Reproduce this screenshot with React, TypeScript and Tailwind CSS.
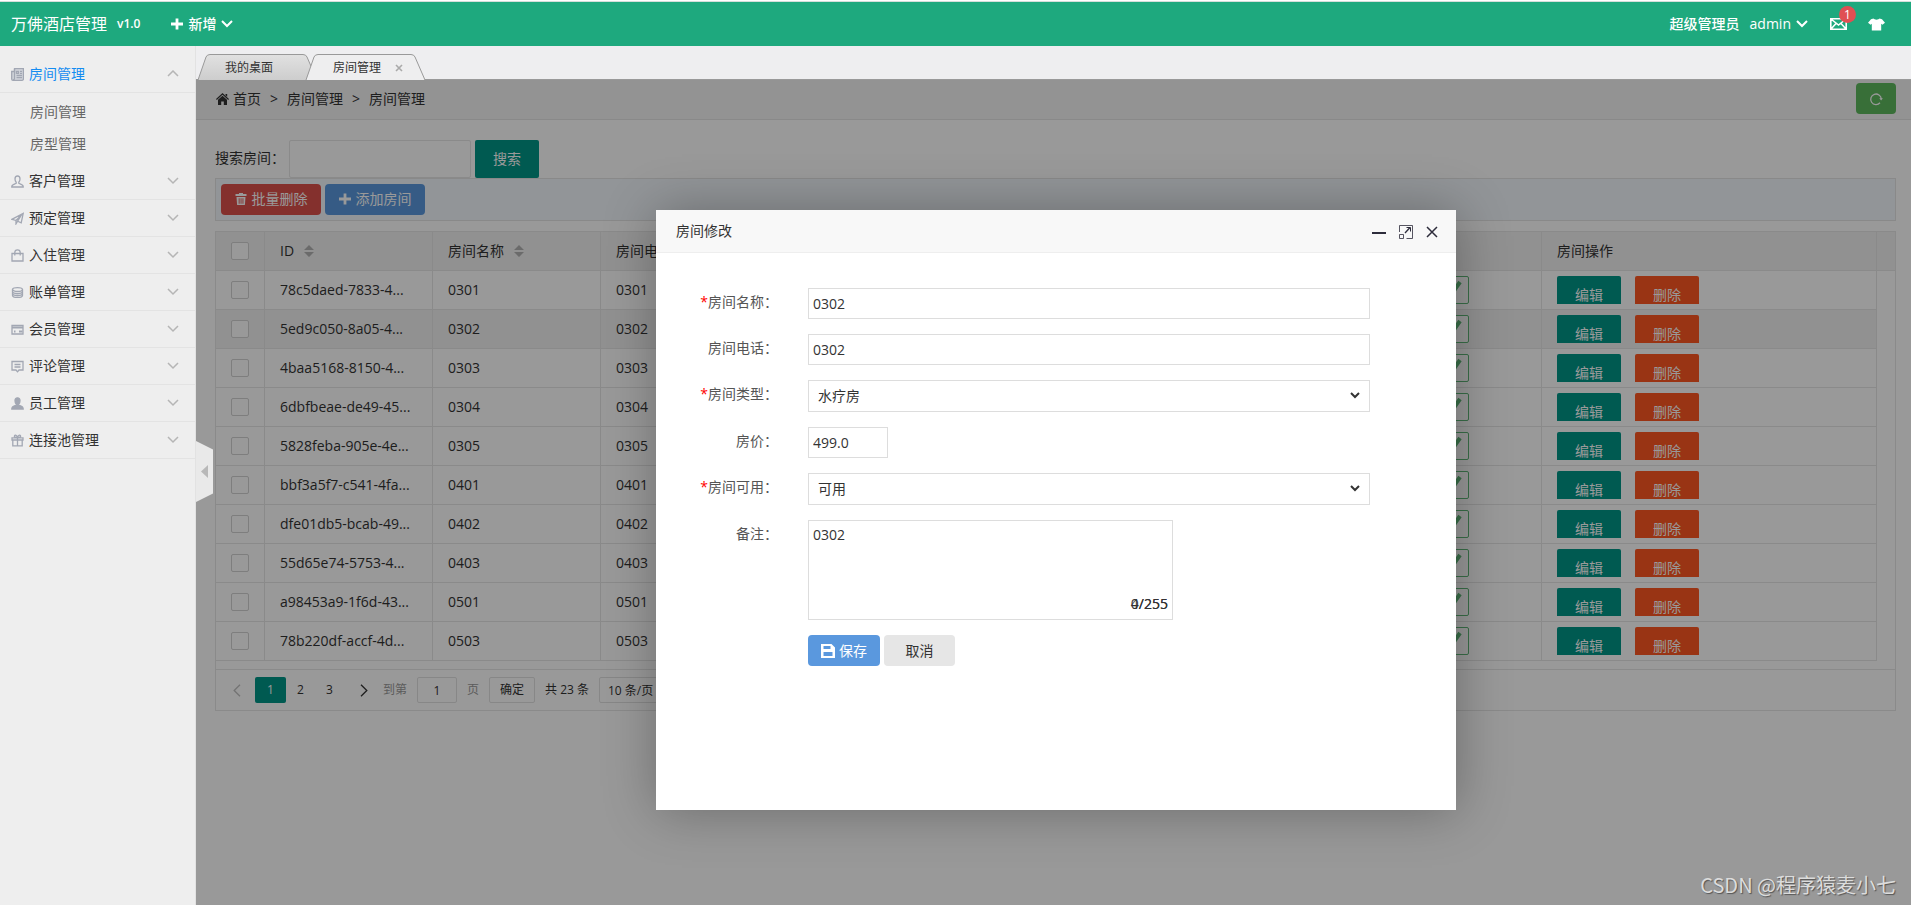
import { useState, type ReactNode } from 'react'

const rooms = [
  { id: '78c5daed-7833-4...', name: '0301' },
  { id: '5ed9c050-8a05-4...', name: '0302' },
  { id: '4baa5168-8150-4...', name: '0303' },
  { id: '6dbfbeae-de49-45...', name: '0304' },
  { id: '5828feba-905e-4e...', name: '0305' },
  { id: 'bbf3a5f7-c541-4fa...', name: '0401' },
  { id: 'dfe01db5-bcab-49...', name: '0402' },
  { id: '55d65e74-5753-4...', name: '0403' },
  { id: 'a98453a9-1f6d-43...', name: '0501' },
  { id: '78b220df-accf-4d...', name: '0503' },
]

const menuIcons: Record<string, ReactNode> = {
  room: (
    <>
      <path d="M3.5.7h8.900v10.300a1.300 1.300 0 0 1-1.300 1.300H2A1.300 1.300 0 0 1 .7 11V3.500h2.800z" fill="#d3d6dc" />
      <path d="M3.500 1v9.500A1.500 1.500 0 0 1 2 12" />
      <path d="M5.500 3.300h2v2h-2zM9 3.300h2M9 5.300h2M5.500 7.500H11M5.500 9.700H11" />
    </>
  ),
  customer: <path d="M6.500 1C4.800 1 4 2.300 4 4c0 1.600.5 2.600 1.200 3.300v1C4 9 .8 9.500.8 11.500V12h11.400v-.5c0-2-3.200-2.500-4.400-3.200v-1C8.500 6.600 9 5.600 9 4c0-1.700-.8-3-2.500-3z" />,
  booking: <path d="M.8 7.300 12.200 1.300 10.200 10.800 6.600 9.200 5 11.800V8.500L.8 7.300zM5 8.500l5.500-5.500M6.600 9.200l4-6.500" />,
  checkin: <path d="M1 4.500h11V12H1zM3.800 6.500v-3C3.800 2 5 .8 6.500.8S9.200 2 9.200 3.500v3" />,
  bill: (
    <>
      <ellipse cx="6.500" cy="3.500" rx="5" ry="1.900" />
      <path d="M1.500 3.500v6c0 1 2.200 1.900 5 1.900s5-.9 5-1.900v-6M1.500 5.600c0 1 2.200 1.900 5 1.900s5-.9 5-1.900M1.500 7.600c0 1 2.200 1.900 5 1.900s5-.9 5-1.900" />
    </>
  ),
  member: (
    <>
      <path d="M1 2.500h11v8.500H1z" />
      <path d="M1 4.500h11M8 8.500h3.500M3 8.500h1.500" strokeWidth="2" />
    </>
  ),
  comment: <path d="M1 1.500h11v8.500H8L6.500 11.800 5 10H1zM3.500 4.500h6M3.500 7h6" />,
  staff: <path d="M6.500.8C4.800.8 4 2.100 4 3.800c0 1.700.6 2.700 1.300 3.400v1C4 9 .8 9 .8 12h11.400c0-3-3.200-3-4.500-3.800v-1C8.400 6.500 9 5.500 9 3.800 9 2.100 8.200.8 6.500.8z" fill="currentColor" />,
  pool: <path d="M1 3.800h11V6H1zM1.800 6v5.800h9.400V6M6.500 3.800v8M6.500 3.500C4 3.500 3 2.800 3.500 1.800S6 1 6.500 3.500C7 1 9 .8 9.500 1.800S9 3.500 6.500 3.500z" />,
}

const menus = [
  { icon: 'customer', text: '客户管理' },
  { icon: 'booking', text: '预定管理' },
  { icon: 'checkin', text: '入住管理' },
  { icon: 'bill', text: '账单管理' },
  { icon: 'member', text: '会员管理' },
  { icon: 'comment', text: '评论管理' },
  { icon: 'staff', text: '员工管理' },
  { icon: 'pool', text: '连接池管理' },
]

function MenuIcon({ name }: { name: string }) {
  return (
    <svg width="13" height="13" viewBox="0 0 13 13" fill="none" stroke="currentColor" strokeWidth="1.3" className="shrink-0 text-[#a2a7b3]">
      {menuIcons[name]}
    </svg>
  )
}

function Chevron({ up = false, className = '' }: { up?: boolean; className?: string }) {
  return (
    <svg width="12" height="8" viewBox="0 0 12 8" fill="none" stroke="currentColor" className={className}>
      <path d={up ? 'M1 6l5-5 5 5' : 'M1 1l5 5 5-5'} />
    </svg>
  )
}

function PlusIcon() {
  return (
    <svg width="12" height="12" viewBox="0 0 12 12" fill="currentColor">
      <path d="M4.600.5h2.800v4.100H12v2.800H7.400v4.100H4.600V7.400H0V4.600h4.600z" />
    </svg>
  )
}

function TopBar() {
  return (
    <>
      <div className="h-[2px] shrink-0 border-b border-[#d5dedb] bg-white" />
      <header className="flex h-11 shrink-0 items-center bg-[#1ea97e] pr-[26px] pl-[11px] text-white">
        <a href="#" className="text-base leading-6">万佛酒店管理</a>
        <span className="ml-[10px] text-xs font-semibold">v1.0</span>
        <button type="button" className="ml-[31px] flex items-center gap-[5px] font-medium">
          <PlusIcon />
          新增
          <Chevron className="stroke-2" />
        </button>
        <div className="ml-auto flex items-center">
          <span className="font-medium">超级管理员</span>
          <button type="button" className="ml-[10px] flex items-center gap-[5px] font-medium">
            admin
            <Chevron className="stroke-2" />
          </button>
          <a href="#" aria-label="消息" className="relative ml-[22px]">
            <svg width="17" height="12" viewBox="0 0 17 12" fill="none" stroke="currentColor" strokeWidth="1.600">
              <path d="M.8.8h15.400v10.400H.8zM1 1l7.500 6L16 1M1 11l5-5.500M16 11l-5-5.500" />
            </svg>
            <span className="absolute -top-3 left-[9px] flex size-[17px] items-center justify-center rounded-full bg-[#e04f53] text-xs">1</span>
          </a>
          <a href="#" aria-label="换肤" className="ml-[21px]">
            <svg width="17" height="13" viewBox="0 0 17 13" fill="currentColor">
              <path d="M5.500.5C6.500 2 10.500 2 11.500.5L14 1.200l3 3.600-2.600 2-1.200-1V12.500H3.800V5.800l-1.200 1L0 4.800l3-3.600z" />
            </svg>
          </a>
        </div>
      </header>
    </>
  )
}

function Sidebar() {
  return (
    <aside className="w-49 shrink-0 border-r border-[#e2e2e2] bg-[#eee] pt-[10px]">
      <button type="button" className="flex h-[37px] w-full items-center border-b border-[#e3e3e3] pr-4 pl-[11px] text-[#148cf1]">
        <MenuIcon name="room" />
        <span className="ml-[5px]">房间管理</span>
        <Chevron up className="ml-auto stroke-[1.5] text-[#b5b5b5]" />
      </button>
      <ul className="py-[3px] pl-[30px] leading-8 text-[#666]">
        <li><a href="#">房间管理</a></li>
        <li><a href="#">房型管理</a></li>
      </ul>
      {menus.map((item) => (
        <button key={item.text} type="button" className="flex h-[37px] w-full items-center border-b border-[#e3e3e3] pr-4 pl-[11px]">
          <MenuIcon name={item.icon} />
          <span className="ml-[5px]">{item.text}</span>
          <Chevron className="ml-auto stroke-[1.5] text-[#b5b5b5]" />
        </button>
      ))}
    </aside>
  )
}

function Tab({ text, active = false }: { text: string; active?: boolean }) {
  return (
    <li className={`relative -mb-px flex h-[26px] w-[120px] items-center pt-[2px] pl-7 text-xs ${active ? '-ml-3' : ''}`}>
      <svg width="121" height="26" viewBox="0 0 121 26" className="absolute inset-0" fill={active ? '#eeeeef' : 'url(#tabFill)'}>
        <defs>
          <linearGradient id="tabFill" x1="0" y1="0" x2="0" y2="1">
            <stop offset="0" stopColor="#e1e1e1" />
            <stop offset="1" stopColor="#cdcdcd" />
          </linearGradient>
        </defs>
        <path d="M1 26 9 3Q10 .5 13 .5H106Q109 .5 110 3L120 26" stroke="#999" />
      </svg>
      <a href="#" className="relative">{text}</a>
      {active && (
        <button type="button" aria-label="关闭" className="relative ml-[14px] text-[#aaa]">
          <svg width="8" height="8" viewBox="0 0 8 8" stroke="currentColor" strokeWidth="1.600">
            <path d="M1 1l6 6M7 1 1 7" />
          </svg>
        </button>
      )}
    </li>
  )
}

function Breadcrumb() {
  return (
    <nav className="flex h-10 items-center border-b border-[#e5e5e5] bg-[#f5f5f5] pr-[15px] pb-[2px] pl-5">
      <svg width="13" height="12" viewBox="0 0 13 12" fill="currentColor" className="mr-1">
        <path d="M6.500 0 13 6l-.8.9L6.500 1.700.8 6.900 0 6zM6.500 2.800l4.500 4V12H7.800V8.500H5.200V12H2V6.800zM9.500 1h1.700v2.800L9.500 2.200z" />
      </svg>
      <a href="#">首页</a>
      <span className="mx-[9px]">&gt;</span>
      <span>房间管理</span>
      <span className="mx-[9px]">&gt;</span>
      <span>房间管理</span>
      <button type="button" aria-label="刷新" className="ml-auto flex h-[31px] w-10 items-center justify-center rounded bg-[#5eb95e] text-white">
        <svg width="14" height="14" viewBox="0 0 14 14" fill="none" stroke="currentColor" strokeWidth="1.300">
          <path d="M11 10.800A5.300 5.300 0 1 1 12.300 7" />
          <path d="M10.300 6.300h3.600l-1.800 2.200z" fill="currentColor" stroke="none" />
        </svg>
      </button>
    </nav>
  )
}

function SortIcon() {
  return (
    <svg width="10" height="12" viewBox="0 0 10 12" fill="#b2b2b2">
      <path d="M5 0l5 5H0zM5 12l5-5H0z" />
    </svg>
  )
}

const cell = 'h-[39px] border-r border-b border-[#e6e6e6] px-[15px] text-left font-normal whitespace-nowrap'
const checkbox = 'block size-[18px] appearance-none rounded-xs border border-[#d2d2d2] bg-white'

function RoomTable() {
  return (
    <div className="mt-[10px] border border-[#e6e6e6]">
      <table className="w-full table-fixed border-separate border-spacing-0">
        <colgroup>
          <col className="w-[49px]" />
          <col className="w-42" />
          <col className="w-42" />
          <col className="w-42" />
          <col />
          <col />
          <col />
          <col className="w-42" />
          <col className="w-[335px]" />
          <col className="w-[18px]" />
        </colgroup>
        <thead className="bg-[#f2f2f2]">
          <tr>
            <th className={cell}><input type="checkbox" aria-label="全选" className={checkbox} /></th>
            <th className={cell}><span className="flex items-center gap-[10px]">ID <SortIcon /></span></th>
            <th className={cell}><span className="flex items-center gap-[10px]">房间名称 <SortIcon /></span></th>
            <th className={cell}>房间电话</th>
            <th className={cell}>房间类型</th>
            <th className={cell}>房价</th>
            <th className={cell}>备注</th>
            <th className={cell}>房间可用</th>
            <th className={cell}>房间操作</th>
            <th className="border-b border-[#e6e6e6]" />
          </tr>
        </thead>
        <tbody>
          {rooms.map((room, i) => (
            <tr key={room.id} className={i === 1 ? 'bg-[#f2f2f2]' : ''}>
              <td className={cell}><input type="checkbox" aria-label={room.name} className={checkbox} /></td>
              <td className={cell}>{room.id}</td>
              <td className={cell}>{room.name}</td>
              <td className={cell}>{room.name}</td>
              <td className={cell} />
              <td className={cell} />
              <td className={cell} />
              <td className={cell}>
                <span className="flex h-7 w-20 justify-end rounded-xs border border-[#5fb878] bg-white">
                  <svg width="30" height="26" viewBox="0 0 30 26" fill="none" stroke="#5fb878" strokeWidth="4">
                    <path d="M8 13l5 5L22 5" />
                  </svg>
                </span>
              </td>
              <td className={cell}>
                <div className="flex h-7 gap-[14px] overflow-hidden text-white">
                  <button type="button" className="h-[38px] w-16 rounded-xs bg-[#009688]">编辑</button>
                  <button type="button" className="h-[38px] w-16 rounded-xs bg-[#ff5722]">删除</button>
                </div>
              </td>
              <td className="bg-white" />
            </tr>
          ))}
        </tbody>
      </table>
      <div className="mt-2 flex h-[41px] items-center border-t border-[#e6e6e6] pl-[7px] text-xs">
        <button type="button" aria-label="上一页" className="mr-[5px] flex w-[27px] justify-center text-[#c0c0c0]">
          <svg width="8" height="13" viewBox="0 0 8 13" fill="none" stroke="currentColor" strokeWidth="1.300"><path d="M7 .8 1.200 6.500 7 12.200" /></svg>
        </button>
        <button type="button" className="h-[26px] w-[31px] rounded-xs bg-[#009688] text-white">1</button>
        <button type="button" className="h-[26px] w-[29px]">2</button>
        <button type="button" className="h-[26px] w-[29px]">3</button>
        <button type="button" aria-label="下一页" className="flex w-[39px] justify-center">
          <svg width="8" height="13" viewBox="0 0 8 13" fill="none" stroke="currentColor" strokeWidth="1.300"><path d="M1 .8l5.800 5.700L1 12.200" /></svg>
        </button>
        <label htmlFor="page" className="text-[#999]">到第</label>
        <input id="page" defaultValue="1" className="mx-[10px] h-[26px] w-10 rounded-xs border border-[#e2e2e2] bg-white text-center" />
        <span className="text-[#999]">页</span>
        <button type="button" className="mx-[10px] h-[26px] w-[46px] rounded-xs border border-[#e2e2e2] bg-white">确定</button>
        <span>共 23 条</span>
        <select aria-label="每页条数" className="ml-[10px] h-[26px] rounded-xs border border-[#e2e2e2] bg-white px-1">
          <option>10 条/页</option>
        </select>
      </div>
    </div>
  )
}

function Field({ id, label, required = false, children }: { id: string; label: string; required?: boolean; children: ReactNode }) {
  return (
    <div className="flex items-start">
      <label htmlFor={id} className="w-[122px] shrink-0 pt-1 text-right leading-5 text-[#555]">
        {required && <span className="text-[#f00]">*</span>}
        {label}：
      </label>
      <div className="ml-[30px] flex grow">{children}</div>
    </div>
  )
}

const control = 'border border-[#ddd] bg-white outline-none'

function Select({ id, options }: { id: string; options: string[] }) {
  return (
    <div className="relative w-full">
      <select id={id} className={`block h-8 w-full appearance-none px-[9px] pb-px ${control}`}>
        {options.map((option) => (
          <option key={option}>{option}</option>
        ))}
      </select>
      <svg width="10" height="7" viewBox="0 0 10 7" fill="none" stroke="currentColor" strokeWidth="2" className="pointer-events-none absolute top-3 right-[10px]">
        <path d="M1 1l4 4 4-4" />
      </svg>
    </div>
  )
}

function RoomDialog() {
  const [note, setNote] = useState('0302')

  return (
    <section role="dialog" aria-label="房间修改" className="absolute top-[130px] left-[460px] h-[600px] w-[800px] bg-white shadow-[1px_1px_50px_rgba(0,0,0,0.3)]">
      <div className="flex h-[43px] items-center border-b border-[#eee] bg-[#f8f8f8] pr-[18px] pl-5">
        <h2 className="mr-auto">房间修改</h2>
        <div className="flex items-center gap-[13px] pt-[2px] text-[#2d2c3b]">
          <button type="button" aria-label="最小化">
            <svg width="14" height="14" viewBox="0 0 14 14" stroke="currentColor" strokeWidth="2"><path d="M0 8h14" /></svg>
          </button>
          <button type="button" aria-label="最大化">
            <svg width="14" height="14" viewBox="0 0 14 14" fill="none" stroke="currentColor">
              <path d="M.5 7V.5h13v13H7.500M.5 9.500h4v4h-4z" opacity=".8" />
              <path d="M6 8l5-5.500" strokeWidth="1.300" />
              <path d="M7.500 2.500h4v4" />
            </svg>
          </button>
          <button type="button" aria-label="关闭">
            <svg width="12" height="12" viewBox="0 0 12 12" stroke="currentColor" strokeWidth="1.500"><path d="M1 1l10 10M11 1 1 11" /></svg>
          </button>
        </div>
      </div>
      <form className="flex flex-col gap-[15px] pt-[35px] pr-[86px]">
        <Field id="name" label="房间名称" required>
          <input id="name" defaultValue="0302" className={`h-[31px] w-full px-1 ${control}`} />
        </Field>
        <Field id="phone" label="房间电话">
          <input id="phone" defaultValue="0302" className={`h-[31px] w-full px-1 ${control}`} />
        </Field>
        <Field id="type" label="房间类型" required>
          <Select id="type" options={['水疗房']} />
        </Field>
        <Field id="price" label="房价">
          <input id="price" defaultValue="499.0" className={`h-[31px] w-20 px-1 ${control}`} />
        </Field>
        <Field id="usable" label="房间可用" required>
          <Select id="usable" options={['可用']} />
        </Field>
        <Field id="note" label="备注">
          <div className="relative w-[365px]">
            <textarea id="note" value={note} onChange={(e) => setNote(e.target.value)} className={`block h-25 w-full resize-none px-1 py-1 leading-5 ${control}`} />
            <span className="absolute right-[5px] bottom-[6px]">0/255</span>
            <span className="absolute right-[5px] bottom-[6px]">{note.length}/255</span>
          </div>
        </Field>
        <div className="ml-[152px] flex gap-1">
          <button type="button" className="flex h-[31px] w-18 items-center justify-center gap-1 rounded bg-[#5a98de] text-white">
            <svg width="14" height="14" viewBox="0 0 14 14" fill="currentColor" fillRule="evenodd">
              <path d="M0 0h10.500L14 3.500V14H0zM2.500 2v3h7V2zM2.500 8v4h9V8z" />
            </svg>
            保存
          </button>
          <button type="button" className="h-[31px] w-[71px] rounded bg-[#e6e6e6]">取消</button>
        </div>
      </form>
    </section>
  )
}

export default function App() {
  return (
    <div className="flex h-screen flex-col overflow-hidden bg-white font-['Open_Sans','Noto_Sans_CJK_SC',sans-serif] text-sm text-[#333]">
      <TopBar />
      <div className="flex min-h-0 grow">
        <Sidebar />
        <div className="flex min-w-0 grow flex-col">
          <ul className="flex h-[34px] shrink-0 items-end border-b border-[#999] bg-[#eeeef0] pl-px">
            <Tab text="我的桌面" />
            <Tab text="房间管理" active />
          </ul>
          <main className="relative grow">
            <Breadcrumb />
            <div className="pt-5 pr-[15px] pl-[19px]">
              <form className="flex items-center">
                <label htmlFor="search" className="pb-[2px]">搜索房间：</label>
                <input id="search" className="ml-1 h-[38px] w-[182px] rounded-xs border border-[#e6e6e6] bg-white px-2" />
                <button type="button" className="ml-1 h-[38px] w-16 rounded-xs bg-[#009688] text-white">搜索</button>
              </form>
              <div className="flex gap-1 border border-[#e5e5e5] bg-[#f3f9fd] p-[5px] text-white">
                <button type="button" className="flex h-[31px] w-25 items-center justify-center gap-[5px] rounded bg-[#dd514c] pb-[2px]">
                  <svg width="12" height="12" viewBox="0 0 12 12" fill="currentColor" fillRule="evenodd">
                    <path d="M4 0h4v1h3.500v2H.5V1H4zM1.500 4h9l-.6 8H2.100zM3.700 5.200v5.500h.9V5.200zM5.600 5.200v5.500h.9V5.200zM7.500 5.200v5.500h.9V5.200z" />
                  </svg>
                  批量删除
                </button>
                <button type="button" className="flex h-[31px] w-25 items-center justify-center gap-[5px] rounded bg-[#5a98de] pb-[2px]">
                  <PlusIcon />
                  添加房间
                </button>
              </div>
              <RoomTable />
            </div>
            <div className="absolute inset-0 bg-black/40" />
            <button type="button" aria-label="收起菜单" className="absolute top-[361px] left-0">
              <svg width="17" height="61" viewBox="0 0 17 61">
                <path d="M0 0 17 8.500V52.500L0 61z" fill="#e9e9e9" />
                <path d="M12 24v13L5 30.500z" fill="#b8b8b8" />
              </svg>
            </button>
            <RoomDialog />
            <p className="absolute right-[15px] bottom-1 font-['Noto_Sans_CJK_SC',sans-serif] text-xl leading-8 text-[#dcdcdc] [text-shadow:1px_1px_1px_#555]">CSDN @程序猿麦小七</p>
          </main>
        </div>
      </div>
    </div>
  )
}
